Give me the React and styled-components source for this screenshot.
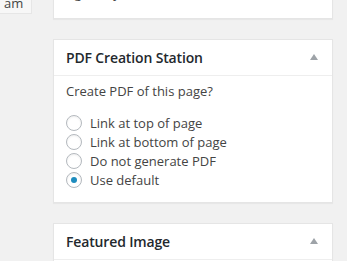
import React from 'react';
import styled, { createGlobalStyle } from 'styled-components';

const Global = createGlobalStyle`
	html, body {
		margin: 0;
		padding: 0;
		background: #f1f1f1;
		font-family: 'Open Sans', 'Liberation Sans', sans-serif;
		color: #444;
		font-size: 13px;
	}
`;

const Page = styled.div`
	display: flex;
	align-items: flex-start;
	width: 347px;
	height: 261px;
	overflow: hidden;
`;

const Side = styled.div`
	width: 53px;
	flex: none;
`;

const TimeBox = styled.div`
	width: 31px;
	height: 34px;
	margin-top: -21px;
	background: #f7f7f7;
	border: 1px solid #e6e6e6;
	border-left: none;
	border-top: none;
	box-sizing: content-box;
	display: flex;
	align-items: flex-end;
	span {
		display: block;
		padding-left: 4px;
		line-height: 19px;
		font-size: 13px;
		color: #444;
	}
`;

const Column = styled.div`
	width: 280px;
	margin-top: -29px;
	display: flex;
	flex-direction: column;
	gap: 20px;
`;

const Card = styled.section`
	background: #fff;
	border: 1px solid #e5e5e5;
	box-shadow: 0 1px 1px rgba(0, 0, 0, 0.04);
`;

const Header = styled.div`
	display: flex;
	align-items: center;
	justify-content: space-between;
	padding: 8px 14px 8px 12px;
	border-bottom: 1px solid #eee;
	h2 {
		margin: 0;
		font-size: 14px;
		font-weight: 600;
		letter-spacing: -0.15px;
		line-height: 1.4;
		color: #23282d;
	}
`;

const Toggle = styled.span`
	width: 0;
	height: 0;
	border-left: 4px solid transparent;
	border-right: 4px solid transparent;
	border-bottom: 6px solid #9ea3a8;
`;

const Inside = styled.div`
	padding: ${(p) => p.$top || 0}px 12px ${(p) => p.$bottom ?? 12}px;
	p {
		margin: 0;
		line-height: 19.5px;
	}
`;

const Options = styled.div`
	margin-top: 12px;
	display: flex;
	flex-direction: column;
`;

const Option = styled.label`
	display: flex;
	align-items: center;
	gap: 8px;
	height: 19px;
	line-height: 19px;
	color: #444;
`;

const Radio = styled.span`
	width: 14px;
	height: 14px;
	border-radius: 50%;
	border: 1px solid #b4b9be;
	background: #fff;
	box-shadow: inset 0 1px 2px rgba(0, 0, 0, 0.07);
	display: flex;
	align-items: center;
	justify-content: center;
	flex: none;
	&::after {
		content: '';
		width: 6px;
		height: 6px;
		border-radius: 50%;
		background: #1e8cbe;
		display: ${(p) => (p.$checked ? 'block' : 'none')};
	}
`;

const options = [
	'Link at top of page',
	'Link at bottom of page',
	'Do not generate PDF',
	'Use default',
];

export default function App() {
	return (
		<>
			<Global />
			<Page>
				<Side>
					<TimeBox>
						<span>am</span>
					</TimeBox>
				</Side>
				<Column>
					<Card>
						<Inside $top={12} $bottom={14}>
							<p>right of your screen.</p>
						</Inside>
					</Card>
					<Card>
						<Header>
							<h2>PDF Creation Station</h2>
							<Toggle />
						</Header>
						<Inside $top={6}>
							<p>Create PDF of this page?</p>
							<Options>
								{options.map((o, i) => (
									<Option key={o}>
										<Radio $checked={i === 3} />
										{o}
									</Option>
								))}
							</Options>
						</Inside>
					</Card>
					<Card>
						<Header>
							<h2>Featured Image</h2>
							<Toggle />
						</Header>
						<Inside $top={11}>
							<p>Set featured image</p>
						</Inside>
					</Card>
				</Column>
			</Page>
		</>
	);
}
